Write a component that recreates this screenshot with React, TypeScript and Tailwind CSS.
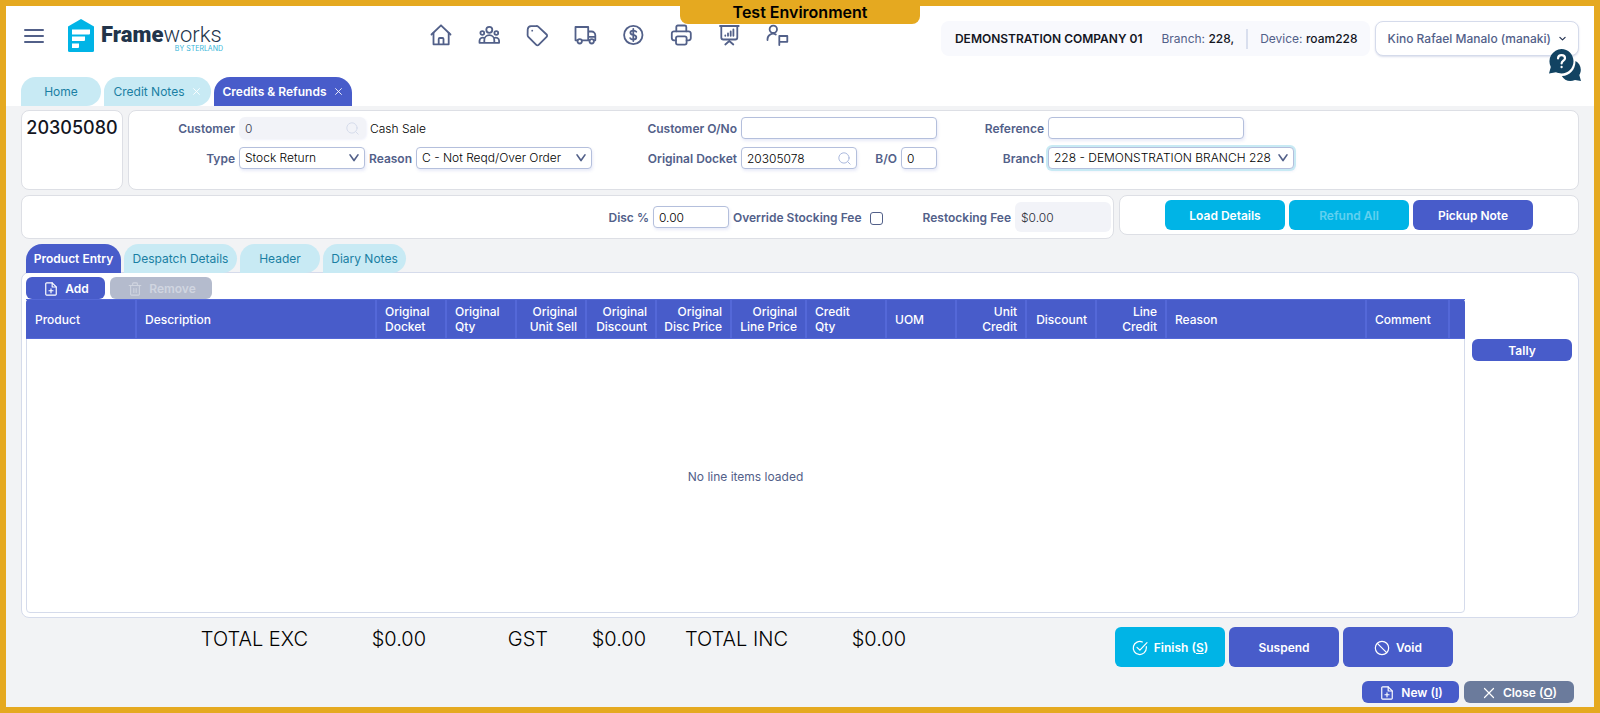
import React from "react";

type IconProps = { className?: string };

function Svg({ className = "", width = 1.6, children }: IconProps & { width?: number; children: React.ReactNode }) {
  return (
    <svg
      viewBox="0 0 24 24"
      fill="none"
      stroke="currentColor"
      strokeWidth={width}
      strokeLinecap="round"
      strokeLinejoin="round"
      aria-hidden="true"
      className={`shrink-0 ${className}`}
    >
      {children}
    </svg>
  );
}

const SearchIcon = ({ className }: IconProps) => (
  <Svg className={className} width={1.8}>
    <circle cx="11" cy="11" r="9.500" />
    <path d="m18 18 4.500 4.500" />
  </Svg>
);

const ChevronIcon = ({ className }: IconProps) => (
  <Svg className={className} width={4}>
    <path d="M2.500 4.500 12 18l9.500-13.500" />
  </Svg>
);

const FilePlusIcon = ({ className }: IconProps) => (
  <Svg className={className} width={2}>
    <path d="M14 1.500H4.500a1.500 1.500 0 0 0-1.500 1.500v18a1.500 1.500 0 0 0 1.500 1.500h15a1.500 1.500 0 0 0 1.500-1.500V8.500z" />
    <path d="M14 1.500v7h7M12 11.500v7M8.500 15h7" />
  </Svg>
);

const TrashIcon = ({ className }: IconProps) => (
  <Svg className={className} width={1.8}>
    <path d="M2 6h20M4.500 6v15a1.500 1.500 0 0 0 1.500 1.500h12a1.500 1.500 0 0 0 1.500-1.500V6M8 6V3a1.500 1.500 0 0 1 1.500-1.500h5A1.500 1.500 0 0 1 16 3v3M10 11v7M14 11v7" />
  </Svg>
);

const navItems: { name: string; icon: React.ReactNode }[] = [
  {
    name: "Home",
    icon: (
      <>
        <path d="M2.500 11.500 12 2.300l9.500 9.200" />
        <path d="M4.500 10v11.300h15.200V10M9.700 21.300v-5.300a1 1 0 0 1 1-1h2.800a1 1 0 0 1 1 1v5.300" />
      </>
    ),
  },
  {
    name: "Customers",
    icon: (
      <>
        <circle cx="12.300" cy="6.800" r="3" />
        <circle cx="5.300" cy="10" r="1.900" />
        <circle cx="19.300" cy="10" r="1.900" />
        <path d="M7.300 19.800v-2.600a5 5 0 0 1 10 0v2.600zM7.300 19.800H2.500v-2a3.200 3.200 0 0 1 4.900-2.700M17.300 19.800h4.800v-2a3.200 3.200 0 0 0-4.900-2.700" />
      </>
    ),
  },
  {
    name: "Products",
    icon: (
      <>
        <path d="M13.200 3.600A2.500 2.500 0 0 0 11.400 3L6 3.200A3.500 3.500 0 0 0 2.700 6.500L2.600 12a2.500 2.500 0 0 0 .7 1.800l8 8a1.600 1.600 0 0 0 2.300 0l8-8a1.600 1.600 0 0 0 0-2.300z" />
        <path d="M7.200 7.700h.01" />
      </>
    ),
  },
  {
    name: "Deliveries",
    icon: (
      <>
        <path d="M4.500 17.300H2.500V4h12.700v13.300H9M15.200 8.500h3.300a3.800 3.800 0 0 1 3.800 3.800v5h-1.500M15.200 17.300h1.300M15.200 13.800h7" />
        <circle cx="6.700" cy="18.300" r="2.200" />
        <circle cx="18.700" cy="18.300" r="2.200" />
      </>
    ),
  },
  {
    name: "Accounts",
    icon: (
      <>
        <circle cx="12.300" cy="12" r="9.200" />
        <path d="M15.300 8.800c-.5-.8-1.500-1.200-3-1.200-1.700 0-2.900.8-2.900 2.100 0 1.400 1.200 1.900 2.900 2.200s3 .9 3 2.300-1.300 2.300-3 2.300c-1.500 0-2.600-.5-3.100-1.400M12.300 6v12" />
      </>
    ),
  },
  {
    name: "Printing",
    icon: (
      <>
        <path d="M7.300 8.300V4a1.500 1.500 0 0 1 1.500-1.500h7A1.500 1.500 0 0 1 17.300 4v4.300" />
        <path d="M7 17.300H5a2.200 2.200 0 0 1-2.200-2.200V10.500A2.200 2.200 0 0 1 5 8.300h14.600a2.200 2.200 0 0 1 2.200 2.200v4.600a2.200 2.200 0 0 1-2.200 2.200h-2" />
        <rect x="7" y="13.300" width="10.600" height="8.300" rx="1.800" />
      </>
    ),
  },
  {
    name: "Reports",
    icon: (
      <>
        <path d="M3 3h18.700M4.300 3v11.500a2 2 0 0 0 2 2h12a2 2 0 0 0 2-2V3M12.300 16.500v2M12.300 18l-4 3.500M12.300 18l4 3.500M8.300 12.500v.3M11 10.500v2.300M13.700 8.500v4.300M16.400 6.500v6.300" />
      </>
    ),
  },
  {
    name: "Contacts",
    icon: (
      <>
        <circle cx="8.300" cy="6.300" r="3.700" />
        <path d="M2.500 17v-.8a5.500 5.500 0 0 1 8.300-4.700M14.300 22v-9h8v5.800h-8" />
      </>
    ),
  },
];

const field =
  "h-[22px] rounded border border-[#b4bfdc] bg-white text-[12px] font-light text-black shadow-[1px_2px_3px_rgba(72,92,200,0.12)] outline-none";

function Label({ id, children, className = "" }: { id: string; children: React.ReactNode; className?: string }) {
  return (
    <label htmlFor={id} className={`shrink-0 pt-0.5 text-right text-[12px] leading-5 font-semibold whitespace-nowrap text-[#526089] ${className}`}>
      {children}
    </label>
  );
}

function Select({ id, value, className = "", ring = "" }: { id: string; value: string; className?: string; ring?: string }) {
  return (
    <div className={`relative shrink-0 ${className}`}>
      <select id={id} className={`${field} block w-full appearance-none pr-5 pb-px pl-[5px] ${ring}`}>
        <option>{value}</option>
      </select>
      <ChevronIcon className="pointer-events-none absolute top-[6px] right-[6px] size-[10px] text-[#526089]" />
    </div>
  );
}

function Tab({ label, active = false, close = false, className = "" }: { label: string; active?: boolean; close?: boolean; className?: string }) {
  return (
    <button
      type="button"
      className={`flex h-[29px] items-center justify-center rounded-t-2xl text-[12px] ${
        active ? "bg-[#485cca] font-semibold text-white" : "rounded-br-2xl bg-[#c8eaf4] text-[#1a7fa3]"
      } ${close ? "pr-0.5" : ""} ${className}`}
    >
      {label}
      {close && (
        <Svg className="ml-2 size-[7px] text-white" width={3}>
          <path d="M2 2l20 20M22 2 2 22" />
        </Svg>
      )}
    </button>
  );
}

const btn = "flex items-center justify-center rounded-md pt-px text-[12px] font-semibold";

const columns: { label: string; width: string; right?: boolean }[] = [
  { label: "Product", width: "w-[111px]" },
  { label: "Description", width: "w-[240px]" },
  { label: "Original\nDocket", width: "w-[70px]" },
  { label: "Original\nQty", width: "w-[70px]" },
  { label: "Original\nUnit Sell", width: "w-[70px]", right: true },
  { label: "Original\nDiscount", width: "w-[70px]", right: true },
  { label: "Original\nDisc Price", width: "w-[75px]", right: true },
  { label: "Original\nLine Price", width: "w-[75px]", right: true },
  { label: "Credit\nQty", width: "w-[80px]" },
  { label: "UOM", width: "w-[70px]" },
  { label: "Unit\nCredit", width: "w-[70px]", right: true },
  { label: "Discount", width: "w-[70px]", right: true },
  { label: "Line\nCredit", width: "w-[70px]", right: true },
  { label: "Reason", width: "w-[200px]" },
  { label: "Comment", width: "w-[83px]" },
  { label: "", width: "w-auto" },
];

function Header() {
  return (
    <header className="bg-white">
      <div className="flex h-[71px] items-start pr-[15px] pl-[18px]">
        <button type="button" aria-label="Menu" className="mt-[23px] flex w-5 flex-col gap-1">
          <span className="h-0.5 rounded bg-[#526089]" />
          <span className="h-0.5 rounded bg-[#526089]" />
          <span className="h-0.5 rounded bg-[#526089]" />
        </button>
        <a href="#" aria-label="Frameworks by Sterland" className="mt-[13px] ml-6 flex gap-[7px]">
          <svg viewBox="0 0 26 33" className="h-[33px] w-[26px]" aria-hidden="true">
            <path d="M0 7.500 13 0l13 7.500V31.500a1.500 1.500 0 0 1-1.500 1.500h-23A1.500 1.500 0 0 1 0 31.500z" fill="#00b4e6" />
            <path d="M4 10.500h18v4a1 1 0 0 1-1 1H4zM4 17.500h13v3.500a1 1 0 0 1-1 1H4zM4 24.500h7V28a1 1 0 0 1-1 1H4z" fill="#fff" />
          </svg>
          <span className="flex w-[122px] flex-col items-end font-['Roboto'] text-[#22344a]">
            <span className="mt-1.5 self-start text-[22px] leading-5">
              <span className="font-black">Frame</span>
              <span className="font-light">works</span>
            </span>
            <span className="font-['Inter'] text-[7px] leading-2 text-[#35b5d8]">BY STERLAND</span>
          </span>
        </a>
        <nav className="mt-[17px] ml-[206px] flex flex-1 gap-6 text-[#526089]">
          {navItems.map((item) => (
            <a key={item.name} href="#" aria-label={item.name}>
              <Svg className="size-6" width={1.8}>{item.icon}</Svg>
            </a>
          ))}
        </nav>
        <div className="mt-[15px] flex h-[35px] items-center rounded-lg bg-[#f8f9fd] pr-3 pl-3.5 text-[12px] text-[#526089]">
          <span className="font-semibold text-[#14161f]">DEMONSTRATION COMPANY 01</span>
          <span className="ml-[19px]">
            Branch: <b className="font-medium text-[#14161f]">228,</b>
          </span>
          <span className="mx-3 h-5 w-0.5 bg-[#d9dfee]" />
          <span>
            Device: <b className="font-medium text-[#14161f]">roam228</b>
          </span>
        </div>
        <div className="relative mt-[15px] ml-[5px]">
          <button
            type="button"
            className="flex h-[35px] items-center gap-2 rounded-lg border border-[#d5dbeb] bg-white px-3 text-[12px] font-medium text-[#526089] shadow-[0_1px_2px_rgba(72,92,160,0.2)]"
          >
            Kino Rafael Manalo (manaki)
            <Svg className="size-[7px] text-[#22304f]" width={4}>
              <path d="m3 8 9 9 9-9" />
            </Svg>
          </button>
          <svg viewBox="0 0 32 32" className="absolute top-7 -right-[2px] size-8" aria-hidden="true">
            <path d="M26.500 12c3.200 1.600 5.300 4.900 5.300 8.700 0 2-.6 3.800-1.500 5.400l1.700 5.800-6-.8c-1.600.6-3.200.8-4.600.8-3.700 0-6.900-2-8.600-5 7.500.3 13.600-5.600 13.700-14.900z" fill="#124362" />
            <path d="M12.500 0C19 0 24.500 5.400 24.500 12.300S19 24.500 12.500 24.500c-2 0-3.900-.5-5.500-1.200L0 24.500 1.800 18A12.400 12.400 0 0 1 12.500 0z" fill="#124362" />
            <path d="M9 9.300c.2-2.100 1.600-3.100 3.500-3.100s3.500 1.200 3.500 3c0 2.500-3.400 2.500-3.400 5.300M12.600 17.800v.4" fill="none" stroke="#fff" strokeWidth="2.200" strokeLinecap="round" />
          </svg>
        </div>
      </div>
      <div className="flex gap-[3px] pl-[15px]">
        <Tab label="Home" className="w-20" />
        <Tab label="Credit Notes" close className="w-[107px]" />
        <Tab label="Credits & Refunds" active close className="w-[138px]" />
      </div>
    </header>
  );
}

function DocketForm() {
  return (
    <section className="flex gap-[5px]">
      <div className="h-20 w-[102px] shrink-0 rounded-lg border border-[#dddfe5] bg-white">
        <h1 className="mt-[3px] flex justify-center text-[18px] leading-7 font-medium text-[#14161f]">20305080</h1>
      </div>
      <div className="flex h-20 flex-1 rounded-lg border border-[#dddfe5] bg-white pt-1.5">
        <div className="flex w-[463px] shrink-0 flex-col gap-2">
          <div className="flex h-[22px] items-center gap-1">
            <Label id="customer" className="w-[106px]">Customer</Label>
            <div className="relative h-[22px] w-[127px]">
              <input id="customer" disabled defaultValue="0" className="block h-full w-full rounded-md bg-[#f2f3f8] px-1.5 pt-px text-[12px] font-light text-[#3b4152] shadow-[1px_1px_2px_rgba(72,92,200,0.08)]" />
              <SearchIcon className="absolute top-[5px] right-[7px] size-[13px] text-[#d5dbea]" />
            </div>
            <span className="pt-0.5 text-[12px] leading-5 font-light text-black">Cash Sale</span>
          </div>
          <div className="flex h-[22px] items-center gap-1">
            <Label id="type" className="w-[106px]">Type</Label>
            <Select id="type" value="Stock Return" className="w-[126px]" />
            <Label id="reason">Reason</Label>
            <Select id="reason" value="C - Not Reqd/Over Order" className="ml-auto w-[176px]" />
          </div>
        </div>
        <div className="flex w-[345px] shrink-0 flex-col gap-2">
          <div className="flex h-[22px] items-center gap-1">
            <Label id="order-no" className="w-[145px]">Customer O/No</Label>
            <input id="order-no" className={`${field} w-[196px] px-[5px]`} />
          </div>
          <div className="flex h-[22px] items-center gap-1">
            <Label id="original-docket" className="w-[145px]">Original Docket</Label>
            <div className="relative w-[116px]">
              <input id="original-docket" defaultValue="20305078" className={`${field} block w-full px-[5px] pt-px`} />
              <SearchIcon className="absolute top-[5px] right-[6px] size-[13px] text-[#a9b7dc]" />
            </div>
            <Label id="back-order" className="ml-auto">B/O</Label>
            <input id="back-order" defaultValue="0" className={`${field} w-9 px-[5px] pt-px`} />
          </div>
        </div>
        <div className="flex flex-col gap-2">
          <div className="flex h-[22px] items-center gap-1">
            <Label id="reference" className="w-[107px]">Reference</Label>
            <input id="reference" className={`${field} w-[196px] px-[5px]`} />
          </div>
          <div className="flex h-[22px] items-center gap-1">
            <Label id="branch" className="w-[107px]">Branch</Label>
            <Select id="branch" value="228 - DEMONSTRATION BRANCH 228" className="w-[246px]" ring="border-[#6fb9cf] ring-2 ring-[#c8eaf4]" />
          </div>
        </div>
      </div>
    </section>
  );
}

function FeesBar() {
  return (
    <section className="mt-[5px] flex items-start gap-[5px]">
      <div className="flex h-11 flex-1 items-center justify-end gap-1 rounded-lg border border-[#dddfe5] bg-white pr-0.5">
        <Label id="disc">Disc %</Label>
        <input id="disc" defaultValue="0.00" className={`${field} w-[76px] px-[5px] pt-px`} />
        <Label id="override-fee">Override Stocking Fee</Label>
        <input id="override-fee" type="checkbox" className="mx-1 mt-0.5 size-[13px] appearance-none rounded-[3px] border border-[#526089]" />
        <Label id="restocking-fee" className="ml-8">Restocking Fee</Label>
        <input id="restocking-fee" readOnly value="$0.00" className="h-[30px] w-24 rounded-md bg-[#f2f3f8] px-1.5 text-[12px] font-light text-[#2a2d38]" />
      </div>
      <div className="flex h-10 w-[460px] shrink-0 items-center justify-center gap-1 rounded-lg border border-[#dddfe5] bg-white">
        <button type="button" className={`${btn} h-[30px] w-[120px] bg-[#00b4e6] text-white`}>Load Details</button>
        <button type="button" disabled className={`${btn} h-[30px] w-[120px] bg-[#00b4e6] text-white/40`}>Refund All</button>
        <button type="button" className={`${btn} h-[30px] w-[120px] bg-[#485cca] text-white`}>Pickup Note</button>
      </div>
    </section>
  );
}

function LineItems() {
  return (
    <section className="mt-[5px] flex flex-1 flex-col">
      <div className="relative flex gap-[3px] pl-[5px]">
        <Tab label="Product Entry" active className="w-[95px]" />
        <Tab label="Despatch Details" className="w-[113px]" />
        <Tab label="Header" className="w-20" />
        <Tab label="Diary Notes" className="w-[83px]" />
      </div>
      <div className="-mt-px flex flex-1 gap-[7px] rounded-lg border border-[#d5dbeb] bg-white px-1 pt-1 pb-1">
        <div className="flex flex-1 flex-col">
          <div className="flex gap-[5px]">
            <button type="button" className={`${btn} h-[22px] w-[79px] gap-[7px] bg-[#485cca] pl-0.5 text-white`}>
              <FilePlusIcon className="size-[14px]" />
              Add
            </button>
            <button type="button" disabled className={`${btn} h-[22px] w-[102px] gap-[7px] bg-[#b4bbcd] pl-0.5 text-[#d0d5e0]`}>
              <TrashIcon className="size-[14px]" />
              Remove
            </button>
          </div>
          <div className="flex flex-1 flex-col rounded-sm border border-[#d5dbeb]">
            <table className="-mx-px -mt-px table-fixed border-separate border-spacing-0 rounded-t-sm bg-[#485cca] text-[12px] leading-[15px] text-white">
              <thead>
                <tr className="h-10">
                  {columns.map((c, i) => (
                    <th
                      key={i}
                      scope="col"
                      className={`${c.width} border-y border-r-2 border-[#5468d8] px-2 py-0 font-medium whitespace-pre-line first:pl-[9px] last:border-r-0 last:px-0 ${c.right ? "pl-0 text-right" : "text-left"}`}
                    >
                      {c.label}
                    </th>
                  ))}
                </tr>
              </thead>
            </table>
            <p className="flex flex-1 items-center justify-center pt-0.5 text-[12px] text-[#526089]">No line items loaded</p>
          </div>
        </div>
        <div className="w-[102px] pt-[62px]">
          <button type="button" className={`${btn} h-[22px] w-[100px] bg-[#485cca] text-white`}>Tally</button>
        </div>
      </div>
    </section>
  );
}

function Footer() {
  const total = "text-right text-[20px] leading-6 text-black";
  return (
    <footer>
      <div className="flex items-start pt-[9px]">
        <dl className="flex flex-1 font-light">
          <dt className={`${total} w-[287px]`}>TOTAL EXC</dt>
          <dd className={`${total} w-[118px]`}>$0.00</dd>
          <dt className={`${total} w-[122px]`}>GST</dt>
          <dd className={`${total} w-[98px]`}>$0.00</dd>
          <dt className={`${total} w-[142px]`}>TOTAL INC</dt>
          <dd className={`${total} w-[118px]`}>$0.00</dd>
        </dl>
        <div className="mr-[126px] flex gap-1">
          <button type="button" className={`${btn} h-10 w-[110px] gap-1.5 bg-[#00b4e6] text-white`}>
            <Svg className="size-4" width={1.8}>
              <path d="M21.500 10v2A9.800 9.800 0 1 1 15.600 3M7.500 11l4.300 4.300L22.500 4" />
            </Svg>
            <span>Finish (<u>S</u>)</span>
          </button>
          <button type="button" className={`${btn} h-10 w-[110px] bg-[#485cca] text-white`}>Suspend</button>
          <button type="button" className={`${btn} h-10 w-[110px] gap-1.5 bg-[#485cca] text-white`}>
            <Svg className="size-4" width={1.8}>
              <circle cx="12" cy="12" r="10" />
              <path d="m5 5 14 14" />
            </Svg>
            Void
          </button>
        </div>
      </div>
      <div className="mt-[14px] flex justify-end gap-[5px] pr-[5px] pb-1">
        <button type="button" className={`${btn} h-[22px] w-[97px] gap-[7px] bg-[#485cca] pl-0.5 text-white`}>
          <FilePlusIcon className="size-[14px]" />
          <span>New (<u>I</u>)</span>
        </button>
        <button type="button" className={`${btn} h-[22px] w-[110px] gap-2 bg-[#6b7b9c] pl-0.5 text-white`}>
          <Svg className="size-3" width={2.4}>
            <path d="M3 3l18 18M21 3 3 21" />
          </Svg>
          <span>Close (<u>O</u>)</span>
        </button>
      </div>
    </footer>
  );
}

export default function App() {
  return (
    <div className="relative flex min-h-screen flex-col border-[6px] border-[#e5a920] bg-[#f2f3f5] font-['Inter',sans-serif]">
      <div className="absolute -top-1.5 left-1/2 flex h-6 w-60 -translate-x-1/2 items-center justify-center rounded-b-lg bg-[#e5a920] text-[16px] font-semibold text-black">
        Test Environment
      </div>
      <Header />
      <main className="flex flex-1 flex-col px-[15px] pt-1">
        <DocketForm />
        <FeesBar />
        <LineItems />
        <Footer />
      </main>
    </div>
  );
}
